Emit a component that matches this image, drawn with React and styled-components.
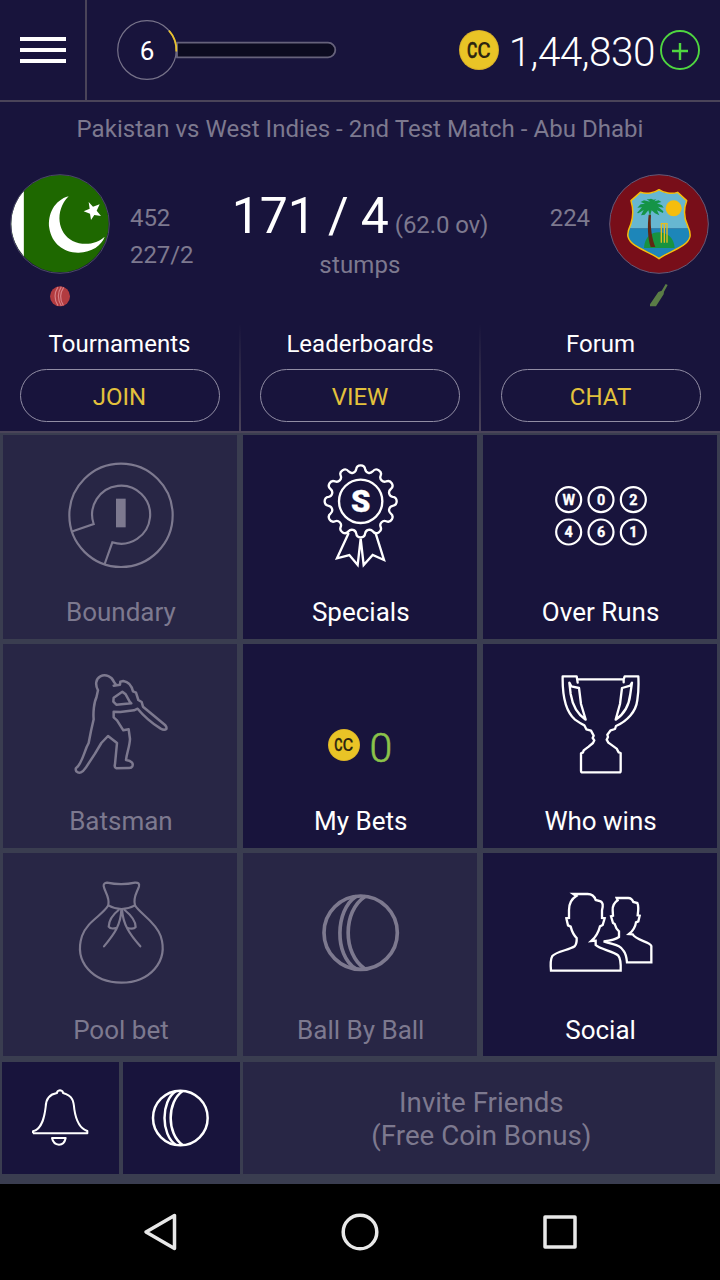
import React from "react";
import styled, { createGlobalStyle } from "styled-components";

const c = {
  navy: "#18143c",
  muted: "#282645",
  gap: "#3a3d50",
  line: "#4a4459",
  dim: "#7d798f",
  gold: "#e3c13c",
};

const Global = createGlobalStyle`
  *, *::before, *::after { box-sizing: border-box; }
  body { margin: 0; background: #000; font-family: Roboto, "Liberation Sans", sans-serif; }
  svg { display: block; flex: none; }
`;

const Screen = styled.div`
  width: 720px;
  height: 1280px;
  display: flex;
  flex-direction: column;
  background: ${c.navy};
  color: #fff;
  overflow: hidden;
`;

const Header = styled.header`
  height: 102px;
  flex: none;
  display: flex;
  border-bottom: 2px solid ${c.line};
`;

const MenuButton = styled.div`
  width: 87px;
  padding: 0 0 0 20px;
  display: flex;
  flex-direction: column;
  justify-content: center;
  gap: 7px;
  border-right: 2px solid ${c.line};
`;

const MenuLine = styled.span`
  width: 46px;
  height: 4px;
  background: #fff;
`;

const Level = styled.div`
  display: flex;
  align-items: center;
  padding-left: 29px;
`;

const Balance = styled.div`
  margin-left: auto;
  display: flex;
  align-items: center;
  padding-right: 20px;
`;

const Amount = styled.span`
  width: 161px;
  padding: 3px 5px 0 0;
  text-align: right;
  font-size: 40.5px;
  font-weight: 300;
  line-height: 48px;
  letter-spacing: -0.5px;
  white-space: nowrap;
`;

const MatchTitle = styled.h1`
  margin: 0;
  height: 72px;
  padding-top: 12px;
  flex: none;
  font-size: 24px;
  font-weight: 400;
  line-height: 30px;
  letter-spacing: 0.04px;
  text-align: center;
  color: ${c.dim};
`;

const Match = styled.section`
  height: 151px;
  flex: none;
  display: grid;
  grid-template-columns: 120px 100px 280px 98px 122px;
`;

const Team = styled.div`
  display: flex;
  flex-direction: column;
  align-items: center;
  gap: 8px;
`;

const Innings = styled.div`
  padding: 26px 8px 0 10px;
  font-size: 24px;
  line-height: 37px;
  letter-spacing: -0.1px;
  color: ${c.dim};
  text-align: ${(p) => p.$align || "left"};
`;

const Score = styled.div`
  padding-top: 12px;
  display: flex;
  flex-direction: column;
  align-items: center;
`;

const ScoreLine = styled.div`
  display: flex;
  align-items: baseline;
  gap: 6px;
  white-space: nowrap;
  line-height: 60px;
`;

const Runs = styled.span`
  font-size: 50px;
  letter-spacing: -0.1px;
`;

const Small = styled.span`
  font-size: 24px;
  line-height: 38px;
  letter-spacing: ${(p) => p.$spacing || "-0.1px"};
  color: ${c.dim};
`;

const Links = styled.section`
  height: 108px;
  flex: none;
  display: grid;
  grid-template-columns: 241px 240px 239px;
  border-bottom: 2px solid ${c.line};
`;

const LinkCell = styled.div`
  display: flex;
  flex-direction: column;
  align-items: center;
  padding-top: 4px;
  border-right: ${(p) => (p.$last ? "0" : "2px solid")};
  border-image: linear-gradient(to bottom, ${c.navy}, ${c.line}) 1;
  font-size: 24px;
  line-height: 30px;
`;

const Pill = styled.div`
  width: 200px;
  height: 53px;
  margin-top: 10px;
  border: 1px solid #918da4;
  border-radius: 27px;
  color: ${c.gold};
  text-align: center;
  line-height: 54px;
`;

const Board = styled.main`
  flex: 1;
  padding: 2px 3px 0;
  background: ${c.gap};
`;

const Tiles = styled.div`
  display: grid;
  grid-template-columns: repeat(3, 1fr);
  grid-template-rows: 204px 204px 203px;
  column-gap: 5.5px;
  row-gap: 5px;
`;

const Tile = styled.div`
  display: flex;
  flex-direction: column;
  align-items: center;
  padding-top: 20px;
  background: ${(p) => (p.$off ? c.muted : c.navy)};
  color: ${(p) => (p.$off ? c.dim : "#fff")};
`;

const TileLabel = styled.span`
  margin-top: 21px;
  padding-left: 1.5px;
  font-size: 26px;
  line-height: 32px;
`;

const Bets = styled.div`
  height: 120px;
  display: flex;
  align-items: center;
  gap: 10px;
  padding-top: 41px;
`;

const BetCount = styled.span`
  padding-top: 6px;
  font-size: 41px;
  font-weight: 300;
  -webkit-text-stroke: 0.6px currentColor;
  line-height: 44px;
  color: #8bc34a;
`;

const Footer = styled.div`
  display: grid;
  grid-template-columns: 117px 117px 472px;
  column-gap: 3.7px;
  height: 112px;
  margin: 6px 0 0 -1px;
`;

const FooterTile = styled.div`
  display: flex;
  align-items: center;
  justify-content: center;
  background: ${(p) => (p.$off ? c.muted : c.navy)};
`;

const Invite = styled.p`
  margin: 1px 0 0 4px;
  font-size: 27.7px;
  line-height: 33px;
  text-align: center;
  color: ${c.dim};
`;

const NavBar = styled.nav`
  height: 96px;
  flex: none;
  display: flex;
  align-items: center;
  justify-content: center;
  gap: 160px;
  background: #000;
`;

function Coin({ size }) {
  return (
    <svg width={size} height={size} viewBox="0 0 40 40">
      <circle cx="20" cy="20" r="20" fill="#d9b02a" />
      <circle cx="20" cy="20" r="19" fill="#e9c426" />
      <g fill="#2c2410" fontFamily="Roboto, sans-serif" fontSize="22" fontWeight="500">
        <text transform="translate(7.9 28) scale(0.72 1)" stroke="#2c2410" strokeWidth="0.5">C</text>
        <text transform="translate(18.2 28) scale(0.94 1)">C</text>
      </g>
    </svg>
  );
}

function LevelBadge() {
  return (
    <svg width="222" height="62" viewBox="0 0 222 62">
      <path d="M61 23.7H212a7.3 7.3 0 0 1 0 14.6H61z" fill="#0c0b20" stroke="#66627b" strokeWidth="1.8" />
      <circle cx="31" cy="31" r="29.3" fill={c.navy} stroke="#77738a" strokeWidth="1.2" />
      <path d="M53 11.7A29.3 29.3 0 0 1 60.3 32.5" fill="none" stroke="#e9c22e" strokeWidth="1.8" />
      <text x="31" y="40.6" fill="#fff" fontSize="26" fontFamily="Roboto, sans-serif" textAnchor="middle">6</text>
    </svg>
  );
}

function PlusIcon() {
  return (
    <svg width="40" height="40" viewBox="0 0 40 40" fill="none" stroke="#4fd740">
      <circle cx="20" cy="20" r="19" strokeWidth="1.9" />
      <path d="M12 21H28M20 13V30" strokeWidth="2.4" />
    </svg>
  );
}

function PakistanFlag() {
  return (
    <svg width="100" height="100" viewBox="30 41 300 300">
      <defs>
        <clipPath id="pk">
          <circle cx="180" cy="190" r="146" />
        </clipPath>
      </defs>
      <g clipPath="url(#pk)">
        <rect x="30" y="41" width="300" height="300" fill="#1e6800" />
        <rect x="30" y="41" width="41.5" height="300" fill="#fff" />
      </g>
      <path d="M206 108C163 119 142 163 148 204C155 250 192 278 236 277C275 276 305 255 314 229C292 250 252 258 218 242C174 220 162 152 206 108Z" fill="#fff" />
      <path d="M266 125L279 139L299 132L290 151L303 167L283 164L273 179L270 160L251 153L269 145Z" fill="#fff" />
      <circle cx="180" cy="191" r="148" fill="none" stroke="#4b4767" strokeWidth="3" />
    </svg>
  );
}

function WestIndiesCrest() {
  const shield =
    "M357 89C370 99 396 103 413 97L440 122C430 149 431 174 444 200Q452 217 450 230C443 262 382 276 357 296C332 276 271 262 264 230C261 215 268 203 272 194C281 168 281 148 273 122L301 97C319 103 344 99 357 89Z";
  return (
    <svg width="100" height="100" viewBox="207 42 300 300">
      <defs>
        <clipPath id="wi">
          <path d={shield} />
        </clipPath>
      </defs>
      <circle cx="357" cy="192" r="148" fill="#780e19" stroke="#625a78" strokeWidth="3" />
      <g clipPath="url(#wi)">
        <rect x="250" y="80" width="210" height="126" fill="#67b7d1" />
        <rect x="250" y="205" width="210" height="100" fill="#1d86b9" />
        <path d="M312 264C314 230 334 217 357 217C380 217 402 232 404 264Z" fill="#189340" />
      </g>
      <path d="M326 164H333C330 205 337 238 346 261H332C323 233 322 198 326 164Z" fill="#612713" />
      <path d="M330 125L320 117L327 118L333 116L341 119L349 118L343 124L356 121L364 126L351 130L366 136L371 143L354 140L370 154L369 159L351 151L358 166L345 160L335 151L330 168L325 151L314 164L303 166L311 150L295 160L291 159L306 142L292 143L302 133L315 131L302 126L312 121Z" fill="#159447" />
      <circle cx="401" cy="145" r="24" fill="#f5bd0c" />
      <path d="M364 248V191M373 248V191M381 248V191M362 191H383" fill="none" stroke="#e6bd20" strokeWidth="4" />
      <path d={shield} fill="none" stroke="#f5bd0c" strokeWidth="4.5" strokeLinejoin="round" />
    </svg>
  );
}

function RedBall() {
  return (
    <svg width="24" height="28" viewBox="144 364 72 84">
      <circle cx="180" cy="407" r="30" fill="#b23b40" />
      <path d="M174 379Q156 407 174 435M184 378Q166 407 184 436M191 380Q173 407 190 434" fill="none" stroke="#d78086" strokeWidth="3.5" />
    </svg>
  );
}

function Bat() {
  return (
    <svg width="24" height="28" viewBox="322 364 72 84">
      <path d="M378 370L384 373L373 393L372 401L349 437H331V431L356 394L366 390Z" fill="#5a7c46" />
    </svg>
  );
}

function TileIcon({ box, width = 6.5, children }) {
  return (
    <svg
      width="120"
      height="120"
      viewBox={`${box} 360 360`}
      fill="none"
      stroke="currentColor"
      strokeWidth={width}
      strokeLinejoin="round"
      strokeLinecap="round"
    >
      {children}
    </svg>
  );
}

const rosette = (() => {
  const at = (deg) => {
    const a = ((deg - 90) * Math.PI) / 180;
    return `${(962 + 97 * Math.cos(a)).toFixed(1)} ${(184 + 97 * Math.sin(a)).toFixed(1)}`;
  };
  let d = `M${at(-8)}`;
  for (let k = 0; k < 12; k++) {
    d += `A13.6 13.6 0 0 1 ${at(k * 30 + 8)}A13 13 0 0 0 ${at(k * 30 + 22)}`;
  }
  return d + "Z";
})();

const BoundaryIcon = () => (
  <TileIcon box="60 45">
    <circle cx="243" cy="226" r="155" />
    <path d="M98 274L161 252A87 87 0 1 1 217 307L194 372" strokeLinejoin="miter" />
    <rect x="228" y="176" width="29" height="86" fill="currentColor" stroke="none" />
  </TileIcon>
);

const SpecialsIcon = () => (
  <TileIcon box="780 45" width={7}>
    <path d="M925 281L891 355L928 345L953 375L962 296L971 375L998 345L1032 360L1007 280" strokeLinejoin="miter" />
    <path d={rosette} fill={c.navy} />
    <circle cx="962" cy="184" r="65" />
    <text x="962" y="217" textAnchor="middle" fill="currentColor" stroke="currentColor" strokeWidth="1" fontFamily="Roboto, sans-serif" fontSize="93" fontWeight="900">S</text>
  </TileIcon>
);

const overs = ["W", "0", "2", "4", "6", "1"];

const OverRunsIcon = () => (
  <TileIcon box="180 45">
    {overs.map((v, i) => {
      const x = 266 + (i % 3) * 97;
      const y = 179 + Math.floor(i / 3) * 97;
      return (
        <g key={v}>
          <circle cx={x} cy={y} r="37.5" />
          <text x={x} y={y + 16} textAnchor="middle" fill="currentColor" stroke="currentColor" strokeWidth="1" fontFamily="Roboto, sans-serif" fontSize="43" fontWeight="700">{v}</text>
        </g>
      );
    })}
  </TileIcon>
);

const BatsmanIcon = () => (
  <TileIcon box="60 72" width={7.5}>
    <path d="M221 137L240 134L241 125L250 123C264 125 275 138 279 154L288 158L295 180L305 186L309 200L376 256Q381 262 379 267Q373 272 362 266Q320 239 293 206L282 211L241 216L221 215V232L231 241L250 271L266 268L270 297C269 320 260 340 258 360C275 363 281 369 277 379Q274 385 265 384L229 385Q222 383 225 372L231 309L204 288L184 309L165 341L138 382Q122 406 109 394Q106 388 108 384C122 377 131 344 140 321L146 309L153 273L161 238C159 218 162 187 169 173L172 160L174 151C165 135 167 116 181 109C197 101 216 110 222 126L228 134" />
    <path d="M221 173L247 155L257 163L269 185L274 190L229 194L220 185Z" />
  </TileIcon>
);

const TrophyIcon = () => (
  <TileIcon box="180 672" width={7}>
    <path d="M293 728L290 709H248C247 760 254 812 285 839Q299 849 313 856L319 868L333 872L341 887L338 894L343 901L339 909L326 920L311 931L309 937L303 940V992Q303 997 308 997H418Q422 997 422 992V939L416 937L410 926L385 908L380 899L384 891L382 884L392 871L405 867L408 858C442 843 468 815 472 780Q477 750 475 709H434L431 718H295M431 718V727" />
    <path d="M268 728L274 739L297 744L303 792L317 839C296 825 278 799 272 762Z" />
    <path d="M456 728L451 737L426 744L420 792L407 839C430 824 447 798 451 762Z" />
  </TileIcon>
);

const PoolIcon = () => (
  <TileIcon box="60 69" width={6.5}>
    <path d="M205 166C210 140 194 127 191 108Q190 99 201 98Q244 107 285 98Q300 97 297 109C291 128 278 142 285 166" />
    <path d="M205 166Q244 188 285 166C298 190 346 213 362 258C387 335 328 398 244 398C159 398 101 336 126 258C142 213 188 196 205 166" />
    <path d="M244 178C243 225 222 253 192 289M246 178C249 224 269 253 301 289M236 180Q207 203 206 230Q212 239 230 233M254 180Q287 207 287 231Q281 239 263 234" />
  </TileIcon>
);

const BallIcon = () => (
  <TileIcon box="780 69" width={11}>
    <circle cx="962" cy="248" r="110" />
    <path d="M947 140C886 180 882 316 947 356M974 140C908 184 908 312 974 356" />
  </TileIcon>
);

const SocialIcon = () => (
  <TileIcon box="180 69" width={7}>
    <path d="M280 132L289 138Q267 151 267 180V204L259 205L264 226L272 230Q278 253 290 264Q291 281 284 289C268 300 229 304 217 318Q210 330 213 362H422C423 337 422 325 415 317C402 303 361 299 347 285V272L334 273Q353 257 360 229L368 225L374 205L366 204V181Q372 159 362 154L347 150Q341 132 323 132Z" strokeLinejoin="miter" />
    <path d="M410 144L413 151Q397 162 398 181L399 197L393 199L399 219L404 222Q408 237 417 244V261C407 269 390 272 371 274C402 286 419 282 431 303Q439 313 441 337H514V288C511 275 467 271 458 253L447 252Q465 238 468 217L475 214L479 197L473 196Q477 170 472 159L460 156Q455 144 445 144Z" strokeLinejoin="miter" />
  </TileIcon>
);

function BellIcon() {
  return (
    <svg width="60" height="60" viewBox="93 145 180 180" fill="none" stroke="#fff" strokeWidth="6" strokeLinejoin="round">
      <path d="M99 281V275C128 267 134 227 137 202Q138 165 171 160Q171 153 180 152Q189 153 189 160C219 168 221 185 223 209C227 236 235 265 262 274V281H99" />
      <path d="M156 295H197Q193 315 177 315Q160 314 156 295Z" />
    </svg>
  );
}

function SmallBallIcon() {
  return (
    <svg width="60" height="60" viewBox="455 144 180 180" fill="none" stroke="#fff" strokeWidth="7.5">
      <circle cx="543" cy="234" r="82" />
      <path d="M530 153C484 183 484 284 530 315M550 153C502 186 502 282 550 315" />
    </svg>
  );
}

const tiles = [
  { label: "Boundary", off: true, art: <BoundaryIcon /> },
  { label: "Specials", art: <SpecialsIcon /> },
  { label: "Over Runs", art: <OverRunsIcon /> },
  { label: "Batsman", off: true, art: <BatsmanIcon /> },
  {
    label: "My Bets",
    art: (
      <Bets>
        <Coin size={32} />
        <BetCount>0</BetCount>
      </Bets>
    ),
  },
  { label: "Who wins", art: <TrophyIcon /> },
  { label: "Pool bet", off: true, art: <PoolIcon /> },
  { label: "Ball By Ball", off: true, art: <BallIcon /> },
  { label: "Social", art: <SocialIcon /> },
];

const links = [
  ["Tournaments", "JOIN"],
  ["Leaderboards", "VIEW"],
  ["Forum", "CHAT"],
];

export default function App() {
  return (
    <Screen>
      <Global />
      <Header>
        <MenuButton>
          <MenuLine />
          <MenuLine />
          <MenuLine />
        </MenuButton>
        <Level>
          <LevelBadge />
        </Level>
        <Balance>
          <Coin size={40} />
          <Amount>1,44,830</Amount>
          <PlusIcon />
        </Balance>
      </Header>

      <MatchTitle>Pakistan vs West Indies - 2nd Test Match - Abu Dhabi</MatchTitle>
      <Match>
        <Team>
          <PakistanFlag />
          <RedBall />
        </Team>
        <Innings>
          452
          <br />
          227/2
        </Innings>
        <Score>
          <ScoreLine>
            <Runs>171 / 4</Runs>
            <Small>(62.0 ov)</Small>
          </ScoreLine>
          <Small $spacing="0.15px">stumps</Small>
        </Score>
        <Innings $align="right">224</Innings>
        <Team>
          <WestIndiesCrest />
          <Bat />
        </Team>
      </Match>

      <Links>
        {links.map(([title, action], i) => (
          <LinkCell key={title} $last={i === 2}>
            {title}
            <Pill>{action}</Pill>
          </LinkCell>
        ))}
      </Links>

      <Board>
        <Tiles>
          {tiles.map((t) => (
            <Tile key={t.label} $off={t.off}>
              {t.art}
              <TileLabel>{t.label}</TileLabel>
            </Tile>
          ))}
        </Tiles>
        <Footer>
          <FooterTile>
            <BellIcon />
          </FooterTile>
          <FooterTile>
            <SmallBallIcon />
          </FooterTile>
          <FooterTile $off>
            <Invite>
              Invite Friends
              <br />
              (Free Coin Bonus)
            </Invite>
          </FooterTile>
        </Footer>
      </Board>

      <NavBar>
        <svg width="40" height="40" viewBox="0 0 40 40" fill="none" stroke="#e8e8e8" strokeWidth="3.5" strokeLinejoin="round">
          <path d="M6 20L34.5 3.5V36.5Z" />
        </svg>
        <svg width="40" height="40" viewBox="0 0 40 40" fill="none" stroke="#e8e8e8" strokeWidth="3.5">
          <circle cx="20" cy="20" r="16.8" />
        </svg>
        <svg width="40" height="40" viewBox="0 0 40 40" fill="none" stroke="#e8e8e8" strokeWidth="3.5" strokeLinejoin="round">
          <rect x="5" y="5" width="30" height="30" />
        </svg>
      </NavBar>
    </Screen>
  );
}
